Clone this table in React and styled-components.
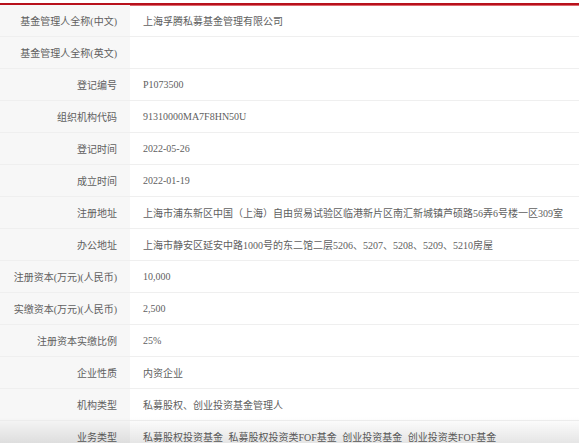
import React from 'react'
import styled, { createGlobalStyle } from 'styled-components'

const GlobalStyle = createGlobalStyle`
    html, body {
        margin: 0;
        padding: 0;
        background: #ffffff;
    }
    body {
        font-family: "Liberation Serif", "Noto Sans CJK SC", serif;
        font-size: 10px;
        color: #606060;
    }
`
const Page = styled.div`
    width: 579px;
    height: 443px;
    overflow: hidden;
    padding-top: 3px;
    box-sizing: border-box;
    position: relative;
`
const Table = styled.div`
    border-top: 2px solid #b8111c;
    box-shadow: inset 0 1px 0 #dc6a70;
`
const Row = styled.div`
    display: grid;
    grid-template-columns: 130px 1fr;
    height: 32px;
    box-sizing: border-box;
    border-bottom: 1px solid #efefef;
`
const Label = styled.div`
    background: #f7f7f7;
    display: flex;
    align-items: center;
    justify-content: flex-end;
    padding-right: 13px;
    white-space: nowrap;
    color: #606060;
`
const Value = styled.div`
    display: flex;
    align-items: center;
    padding-left: 13px;
    white-space: nowrap;
    color: #606060;
    word-spacing: ${(p) => (p.spaced ? '3px' : 'normal')};
`
const Fade = styled.div`
    position: absolute;
    left: 0;
    right: 0;
    bottom: 0;
    height: 26px;
    background: linear-gradient(to bottom, rgba(0, 0, 0, 0), rgba(0, 0, 0, 0.1));
    pointer-events: none;
`

const rows = [
    ['基金管理人全称(中文)', '上海孚腾私募基金管理有限公司'],
    ['基金管理人全称(英文)', ''],
    ['登记编号', 'P1073500'],
    ['组织机构代码', '91310000MA7F8HN50U'],
    ['登记时间', '2022-05-26'],
    ['成立时间', '2022-01-19'],
    ['注册地址', '上海市浦东新区中国（上海）自由贸易试验区临港新片区南汇新城镇芦硕路56弄6号楼一区309室'],
    ['办公地址', '上海市静安区延安中路1000号的东二馆二层5206、5207、5208、5209、5210房屋'],
    ['注册资本(万元)(人民币)', '10,000'],
    ['实缴资本(万元)(人民币)', '2,500'],
    ['注册资本实缴比例', '25%'],
    ['企业性质', '内资企业'],
    ['机构类型', '私募股权、创业投资基金管理人'],
    ['业务类型', '私募股权投资基金 私募股权投资类FOF基金 创业投资基金 创业投资类FOF基金', true],
]

export default function App() {
    return (
        <>
            <GlobalStyle />
            <Page>
                <Table>
                    {rows.map(([label, value, spaced]) => (
                        <Row key={label}>
                            <Label>{label}</Label>
                            <Value spaced={spaced}>{value}</Value>
                        </Row>
                    ))}
                </Table>
                <Fade />
            </Page>
        </>
    )
}
